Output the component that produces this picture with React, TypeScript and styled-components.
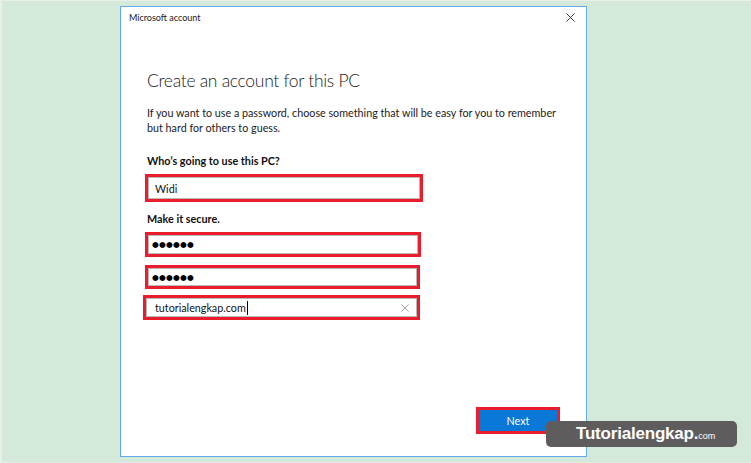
import React from "react";
import styled, { createGlobalStyle } from "styled-components";

const Global = createGlobalStyle`
  html, body { margin: 0; padding: 0; background: #d5e9da; }
  body { font-family: Lato, "Noto Sans", sans-serif; }
  * { box-sizing: border-box; }
`;

const Page = styled.div`
  position: relative;
  width: 751px;
  height: 463px;
  background: #d5e9da;
  border-top: 1px solid #e6efe8;
  border-left: 2px solid #e6efe8;
  border-bottom: 1px solid #e2ebe4;
  padding: 5px 0 0 118px;
  overflow: hidden;
`;

const Dialog = styled.div`
  width: 467px;
  height: 451px;
  background: #fff;
  border: 1px solid #62abe6;
  display: flex;
  flex-direction: column;
`;

const TitleBar = styled.div`
  height: 20px;
  padding: 0 11px 0 8px;
  display: flex;
  align-items: center;
  justify-content: space-between;
`;

const TitleText = styled.span`
  font-size: 9px;
  color: #1a1a1a;
`;

const Content = styled.div`
  display: flex;
  flex-direction: column;
  padding: 0 26px;
`;

const Heading = styled.h1`
  margin: 42px 0 0;
  font-weight: 300;
  font-size: 17.5px;
  letter-spacing: -0.3px;
  line-height: 24px;
  color: #1a1a1a;
  white-space: nowrap;
`;

const Para = styled.p`
  margin: 12px 0 0;
  font-size: 10.75px;
  line-height: 15px;
  color: #1a1a1a;
  white-space: nowrap;
`;

const Label = styled.div<{ $mt: number }>`
  margin-top: ${(p) => p.$mt}px;
  font-size: 10.8px;
  line-height: 16px;
  font-weight: 700;
  color: #111;
`;

const Field = styled.div<{ $mt: number; $h: number; $w: number; $ml?: number; $pl?: number }>`
  margin-top: ${(p) => p.$mt}px;
  margin-left: ${(p) => p.$ml ?? -2}px;
  width: ${(p) => p.$w}px;
  height: ${(p) => p.$h}px;
  border: 3px solid #e91d2b;
  background: #fff;
  box-shadow: inset 0 0 0 1px #b9b9b9;
  display: flex;
  align-items: center;
  padding: 0 8px 0 ${(p) => p.$pl ?? 7}px;
  font-size: 10.75px;
  color: #111;
`;

const Dots = styled.span`
  font-family: "DejaVu Sans", sans-serif;
  font-size: 7.8px;
  letter-spacing: 0.2px;
  color: #000;
  margin-left: -3px;
`;

const Caret = styled.span`
  display: inline-block;
  width: 1px;
  height: 14px;
  background: #000;
  margin-left: 1px;
`;

const FieldText = styled.span`
  flex: 1;
  display: flex;
  align-items: center;
`;

const Footer = styled.div`
  margin-top: auto;
  display: flex;
  justify-content: flex-end;
  padding: 0 26px 22px 0;
`;

const NextButton = styled.button`
  width: 84px;
  height: 27px;
  border: 3px solid #e91d2b;
  background: #0a78d7;
  color: #fff;
  font-family: Lato, "Noto Sans", sans-serif;
  font-size: 10.75px;
  padding: 0;
`;

const Watermark = styled.div`
  position: absolute;
  left: 544px;
  top: 420px;
  width: 191px;
  height: 26px;
  border-radius: 5px;
  background: #5e5c5d;
  display: flex;
  align-items: baseline;
  padding: 3px 0 0 30px;
  color: #fff;
  font-family: "Liberation Sans", Arial, sans-serif;
`;

const Brand = styled.span`
  font-size: 17px;
  font-weight: 700;
  letter-spacing: -0.2px;
`;

const Dom = styled.span`
  font-size: 9px;
`;

const XIcon = ({ size, color, sw }: { size: number; color: string; sw: number }) => (
  <svg width={size} height={size} viewBox="0 0 10 10">
    <path d="M0.5 0.5 L9.5 9.5 M9.5 0.5 L0.5 9.5" stroke={color} strokeWidth={sw} fill="none" />
  </svg>
);

export default function App() {
  return (
    <>
      <Global />
      <Page>
        <Dialog>
          <TitleBar>
            <TitleText>Microsoft account</TitleText>
            <XIcon size={9} color="#333" sw={1.1} />
          </TitleBar>
          <Content>
            <Heading>Create an account for this PC</Heading>
            <Para>
              If you want to use a password, choose something that will be easy for you to remember
              <br />
              but hard for others to guess.
            </Para>
            <Label $mt={18}>Who’s going to use this PC?</Label>
            <Field $mt={5} $h={28} $w={278}>
              <FieldText>Widi</FieldText>
            </Field>
            <Label $mt={9}>Make it secure.</Label>
            <Field $mt={5} $h={25} $w={276}>
              <Dots>●●●●●●</Dots>
            </Field>
            <Field $mt={8} $h={24} $w={275}>
              <Dots>●●●●●●</Dots>
            </Field>
            <Field $mt={6} $h={25} $w={277} $ml={-4} $pl={9}>
              <FieldText>
                tutorialengkap.com
                <Caret />
              </FieldText>
              <XIcon size={8} color="#8a8a8a" sw={1} />
            </Field>
          </Content>
          <Footer>
            <NextButton>Next</NextButton>
          </Footer>
        </Dialog>
        <Watermark>
          <Brand>Tutorialengkap.</Brand>
          <Dom>com</Dom>
        </Watermark>
      </Page>
    </>
  );
}
